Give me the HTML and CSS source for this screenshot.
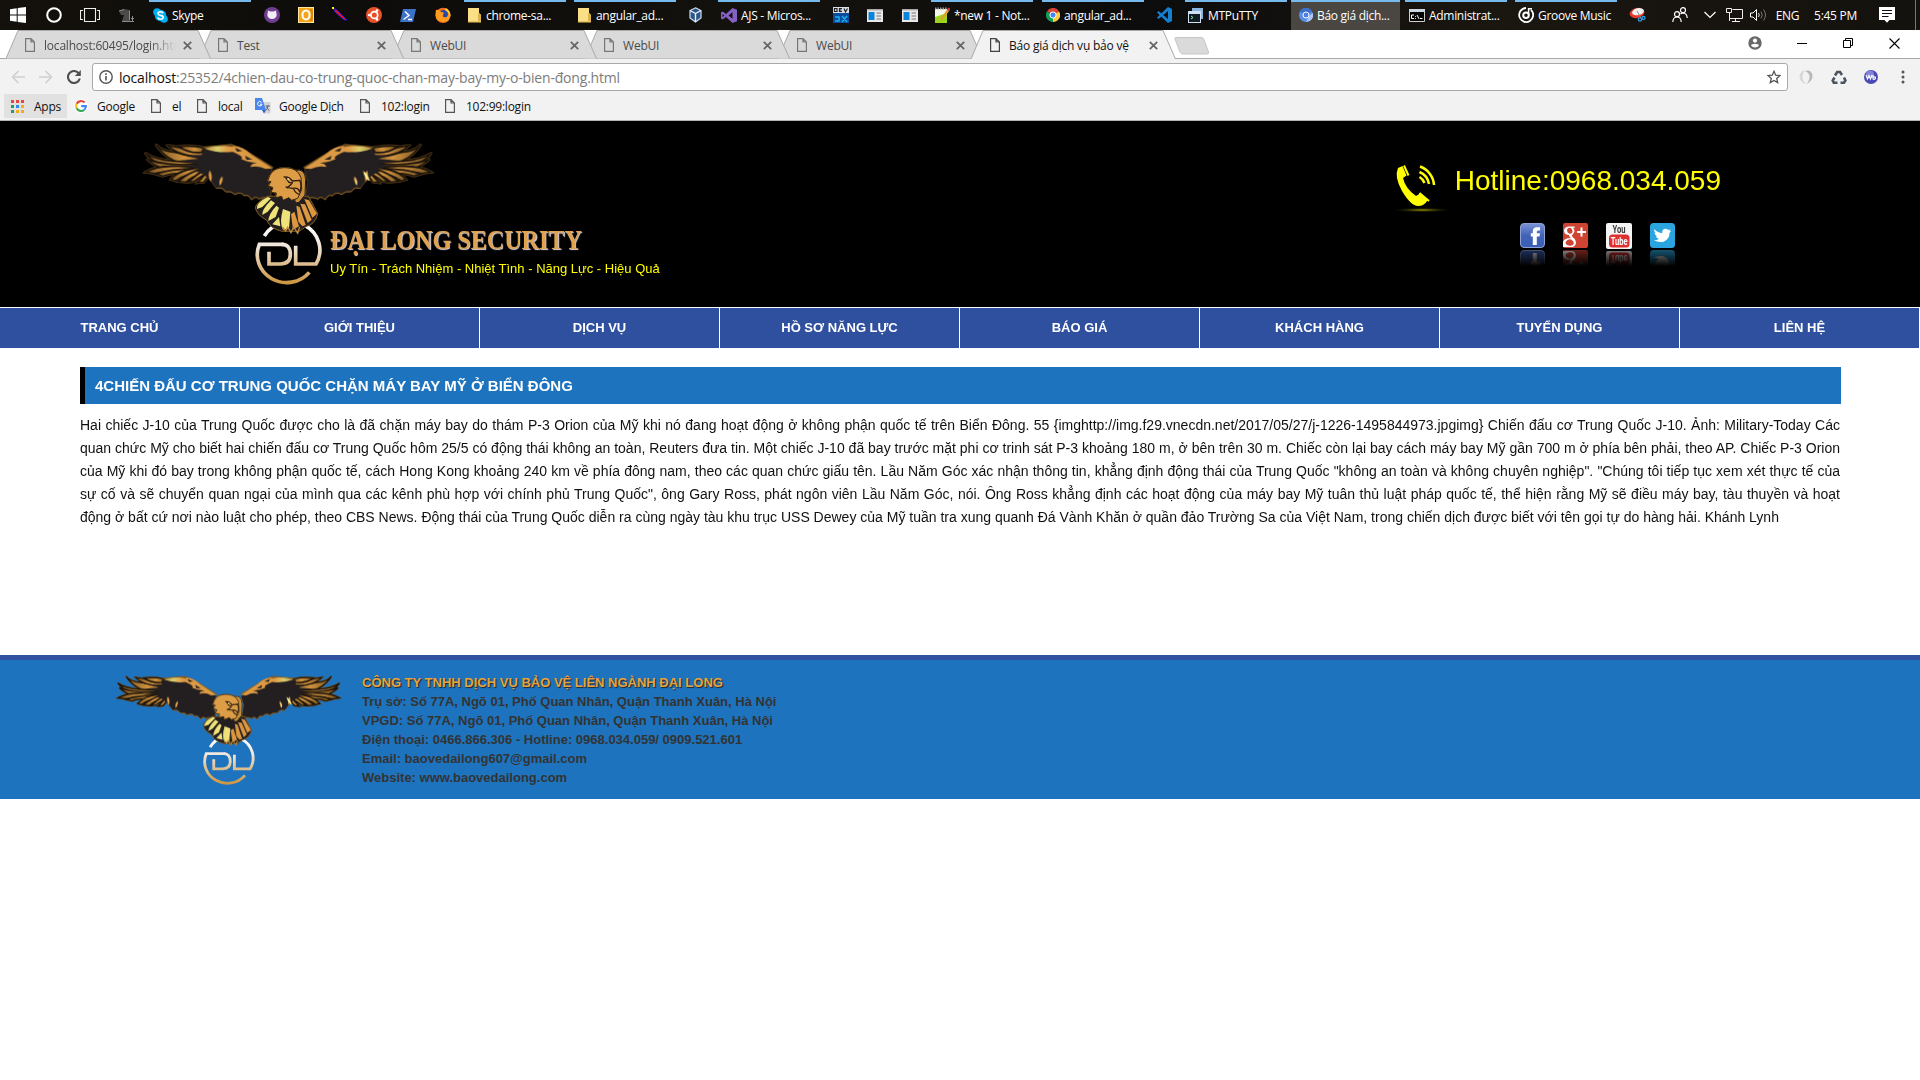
FILE: index.html
```html
<!DOCTYPE html>
<html lang="vi">
<head>
<meta charset="utf-8">
<title>Báo giá dịch vụ bảo vệ</title>
<link rel="stylesheet" href="styles.css">
</head>
<body>
<svg class="defs" width="0" height="0" aria-hidden="true">
  <defs>
    <linearGradient id="gold" x1="0" y1="0" x2="1" y2="0"><stop offset="0" stop-color="#b98a3c"/><stop offset=".45" stop-color="#d8d070"/><stop offset=".75" stop-color="#e3a24a"/><stop offset="1" stop-color="#d9953f"/></linearGradient>
    <linearGradient id="feather" x1="0" y1="0" x2="1" y2="0"><stop offset="0" stop-color="#7a5622"/><stop offset=".6" stop-color="#d29440"/><stop offset="1" stop-color="#8a6128"/></linearGradient>
    <linearGradient id="ring" gradientUnits="userSpaceOnUse" x1="0" y1="270" x2="0" y2="445"><stop offset="0" stop-color="#fff"/><stop offset=".35" stop-color="#efe6dc"/><stop offset="1" stop-color="#cc9540"/></linearGradient>
    <linearGradient id="fbg" x1="0" y1="0" x2="0" y2="1"><stop offset="0" stop-color="#7b93d6"/><stop offset=".5" stop-color="#4263b4"/><stop offset="1" stop-color="#3a5cb8"/></linearGradient>
    <radialGradient id="glow"><stop offset="0" stop-color="#a5a000"/><stop offset="1" stop-color="#000" stop-opacity="0"/></radialGradient>
    <symbol id="page" viewBox="0 0 10 14"><path d="M.6.6H6L9.4 4V13.4H.6ZM6 .6V4H9.4" fill="none" stroke="currentColor" stroke-width="1.2"/></symbol>
    <symbol id="close" viewBox="0 0 9 9"><path d="M.8.8 8.2 8.2M8.2.8.8 8.2" stroke="#666" stroke-width="1.8"/></symbol>
    <symbol id="folder" viewBox="0 0 14 16"><path d="M0 1H11V6L13 8V15H0Z" fill="#fbdf87"/><path d="M11 6 13 8V15H10V7Z" fill="#dcb24a"/><path d="M0 14H13V15.5H0Z" fill="#e9c560"/></symbol>
    <symbol id="window" viewBox="0 0 16 13"><path d="M0 0H16V13H0Z" fill="#e9e9e9"/><path d="M1.500 3H7.500V11H1.500Z" fill="#0a84d8"/><path d="M0 0H16V1.500H0Z" fill="#aaa"/><path d="M9.500 4H14M9.500 7H14M9.500 10H14" stroke="#777"/></symbol>
    <symbol id="wing" viewBox="0 0 465 465" overflow="visible">
      <g fill="url(#feather)" stroke="#1b130b" stroke-width="5.500">
        <path d="M62 28Q78 48 120 52L205 68 190 92Q100 90 62 28Z"/>
        <path d="M98 32Q130 34 158 46L212 40 214 66Q130 66 98 32Z"/>
        <path d="M132 34Q170 30 208 38L200 52Q160 56 132 34Z"/>
        <path d="M30 54Q60 74 112 78L200 84 190 104Q64 102 30 54Z"/>
        <path d="M36 72Q80 92 190 88L180 112Q70 112 36 72Z"/>
        <path d="M30 112Q66 90 130 94L196 96 186 112Q110 104 60 116Z"/>
        <path d="M62 118Q100 102 192 100L182 118Q120 110 84 124Z"/>
        <path d="M106 134Q130 104 196 98L198 112Q150 116 122 138Z"/>
        <path d="M128 140Q160 112 206 100L208 114Q170 124 152 142Z"/>
        <path d="M158 142Q184 118 216 100L220 114Q192 126 178 140Z"/>
        <path d="M186 144Q204 126 222 104L228 116Q214 130 206 142Z"/>
      </g>
      <path d="M205 40 290 32 330 52 412 102 402 140 410 190Q380 184 372 192 362 180 350 194 340 176 328 182 316 168 300 178 288 166 272 170 262 154 244 160L222 132 205 118 182 108 194 102 150 94 190 88 134 76 190 72 160 62 200 60Z" fill="#231f20"/>
      <path d="M410 190Q380 184 372 192 362 180 350 194 340 176 328 182 316 168 300 178 288 166 272 170 262 154 244 160M205 37 290 29 332 48 414 98" fill="none" stroke="#6f4e20" stroke-width="3"/>
      <path d="M207 40Q250 30 292 34L296 50Q250 56 207 40Z" fill="url(#gold)"/>
      <path d="M292 34Q320 32 350 60L412 100 392 102Q370 90 346 96 348 86 366 84 338 82 318 72 330 66 292 50Z" fill="#dd9a45"/>
      <path d="M300 38 322 48 306 50ZM330 62 352 74 334 74Z" fill="#231f20"/>
      <path d="M224 106Q216 122 228 140 234 120 224 106ZM262 124Q250 134 254 152 266 138 262 124Z" fill="#e2a149"/>
    </symbol>
    <symbol id="eagle" viewBox="0 0 930 465">
      <g class="bird">
        <use href="#wing" width="465" height="465"/>
        <use href="#wing" width="465" height="465" transform="translate(920 0) scale(-1 1)"/>
        <path d="M655 124Q664 132 662 150 672 142 655 124ZM684 108Q700 118 704 138 690 134 684 108Z" fill="#fbf29a"/>
      </g>
      <g fill="none" stroke="url(#ring)" stroke-width="11">
        <path d="M388 303A88 84 0 0 1 543 387H482V332"/>
        <path d="M446 328H373A88 84 0 0 0 523 412"/>
        <path d="M402 350V387H436Q466 387 466 358 466 328 440 328.100"/>
      </g>
      <g class="bird">
        <path d="M398 184 520 184 548 236Q540 268 514 274L490 290 440 288Q404 280 396 256 360 236 362 214 372 196 398 184Z" fill="#231f20" stroke="#6f4e20" stroke-width="3"/>
        <g fill="#efe278">
          <path d="M398 186Q362 204 366 222L382 216 408 190Z"/><path d="M408 196Q380 224 382 240L398 230 420 204Z"/><path d="M424 212Q400 238 400 258L422 246 432 218Z"/><path d="M444 222Q432 262 444 284L462 282 466 230Z"/><path d="M432 246 412 268 436 274Z"/>
        </g>
        <g fill="#dc9740">
          <path d="M508 192 522 196 546 236 532 248Z"/><path d="M496 206 510 208 530 254 518 264Z"/><path d="M484 212 494 216 512 270 502 274 490 260Z"/><path d="M468 238 478 230 492 274 474 284Z"/>
        </g>
        <path d="M482 106Q510 100 512 134L510 180 492 202Q476 208 480 186Z" fill="#c78e3d" stroke="#231f20" stroke-width="3"/>
        <path d="M404 122Q414 98 450 98 488 98 498 128L500 164 488 190 470 196 462 188 444 196 440 184 422 188 424 174 408 172 414 158 400 152 408 140 398 138Z" fill="#dd9d47" stroke="#3a260d" stroke-width="3"/>
        <path d="M446 126Q462 124 472 138L494 136Q502 150 494 172 492 156 472 160L452 156M452 128 462 142 474 144M470 146 456 160M476 162Q482 176 494 178" fill="none" stroke="#2c1c10" stroke-width="4"/>
        <circle cx="460" cy="133" r="3" fill="#f7e2a0"/>
        <path d="M442 276 452 288 458 276 468 292 476 276 488 294 494 276" fill="none" stroke="#b98a3c" stroke-width="4"/>
      </g>
    </symbol>
    <symbol id="fb" viewBox="0 0 25 25"><rect x=".5" y=".5" width="24" height="24" rx="3.500" fill="url(#fbg)" stroke="#8ea1d4"/><path d="M12.800 22V13.500H10.800V10.300H12.800V8.200Q12.800 4.300 17 4.300H20V7.600H18.200Q16.800 7.600 16.800 9V10.300H20L19.500 13.500H16.800V22Z" fill="#fff"/></symbol>
    <symbol id="gp" viewBox="0 0 25 25"><rect width="25" height="25" rx="2" fill="#cf4332"/><path d="M11.500 3.500H5.500Q1 4 1 8 1.500 12 6 12 6 14 8 15 1 15 0 19V24H10Q14 22 12.500 17.500 12 15.500 9.500 14 8 12.500 10 11 13 8 10 4.700H12ZM7 4.700Q9.500 5.500 9.500 9 9 11 7 10.800 4 10 4 7 4.500 4.500 7 4.700ZM7.500 16.300Q11 18 10.800 20.500 10 23 6.500 22.800 2.500 22 2.600 19.500 3.500 16.500 7.500 16.300Z" fill="#fff" fill-rule="evenodd"/><path d="M18.500 4.500V13.500M14 9H23" stroke="#fff" stroke-width="2"/></symbol>
    <symbol id="yt" viewBox="0 0 26 26"><rect width="26" height="26" rx="2" fill="#f4f4f4"/><rect x="3" y="11.500" width="20.500" height="13" rx="3.500" fill="#df2f2f"/><text x="13" y="10.300" font-family="Roboto" font-weight="700" font-size="10.500" text-anchor="middle" textLength="13" lengthAdjust="spacingAndGlyphs" fill="#333">You</text><text x="13.200" y="22" font-family="Roboto" font-weight="700" font-size="11" text-anchor="middle" textLength="17" lengthAdjust="spacingAndGlyphs" fill="#fff">Tube</text></symbol>
    <symbol id="tw" viewBox="0 0 25 25"><rect width="25" height="25" rx="3.500" fill="#2aa5df"/><path d="M4.500 6.300Q8 10 12.300 10.200 11.800 6 15.500 5.800 17.200 5.800 18.300 7L20.500 6.200 19.400 8.200 21.300 7.700 19.600 9.700Q19.500 16.500 13.500 18.700 8.300 20 4 17.300 7 17.300 9 15.800 6.500 15.300 5.800 13.200H7.400Q4.500 12 4.500 9.600L6 10Q3.300 8 4.500 6.300Z" fill="#fff"/></symbol>
  </defs>
</svg>

<header class="taskbar">
  <span class="slot"><svg width="16" height="16" viewBox="0 0 16 16"><path d="M0 2.200 6.700 1.300V7.500H0ZM7.700 1.100 16 0V7.500H7.700ZM0 8.500H6.700V14.700L0 13.800ZM7.700 8.500H16V16L7.700 14.900Z" fill="#fff"/></svg></span>
  <span class="slot"><svg width="16" height="16" viewBox="0 0 16 16"><circle cx="8" cy="8" r="6.800" fill="none" stroke="#fff" stroke-width="2"/></svg></span>
  <span class="slot"><svg width="20" height="14" viewBox="0 0 20 14"><path d="M4.500.5H15.500V13.500H4.500ZM3 2.500H.5V11.500H3M17 2.500H19.500V11.500H17" fill="none" stroke="#eee" stroke-width="1.100"/></svg></span>
  <span class="slot"><svg width="15" height="13" viewBox="0 0 15 13"><path d="M0 2 5 0 11 1V12H3L5 6 2 6Z" fill="#4a4a4a"/><path d="M0 2 5 .5M10.500 2V11M13.500 7V12.500M3 12.500H15M12 9.500H15" stroke="#8c8c8c" fill="none"/></svg></span>
  <span class="task open"><svg width="15" height="15" viewBox="0 0 15 15"><circle cx="7.500" cy="7.500" r="5.800" fill="#00aff0"/><circle cx="4" cy="4" r="3.800" fill="#00aff0"/><circle cx="11" cy="11" r="3.800" fill="#00aff0"/><path d="M10.200 5.200Q9.500 3.800 7.500 3.800 5 3.900 5 5.500 5.200 7 7.500 7.400 10.200 7.800 10.200 9.500 10 11.300 7.500 11.300 5.200 11.200 4.700 9.600" fill="none" stroke="#fff" stroke-width="1.600"/></svg><b>Skype</b></span>
  <span class="slot"><svg width="16" height="16" viewBox="0 0 16 16"><circle cx="8" cy="8" r="8" fill="#6f3d92"/><path d="M4 3.500 6.300 4.600H9.700L12 3.500 12.700 8Q12 12 8 12 4 12 3.300 8Z" fill="#f3ecf6"/></svg></span>
  <span class="slot"><svg width="16" height="16" viewBox="0 0 16 16"><rect x=".5" y=".5" width="15" height="15" fill="#f6a31c" stroke="#ffe6a0"/><ellipse cx="8" cy="8" rx="3.600" ry="4.600" fill="none" stroke="#fff" stroke-width="2"/><path d="M12 3H14V13H12" stroke="#c76c00" fill="none"/></svg></span>
  <span class="slot"><svg width="16" height="16" viewBox="0 0 16 16"><path d="M1 1 5 3 15 13 12 13 3 5Z" fill="#e0132c" stroke="#1b1bd0"/><path d="M0 0H2V2H0Z" fill="#ff0"/></svg></span>
  <span class="slot"><svg width="16" height="16" viewBox="0 0 16 16"><circle cx="8" cy="8" r="8" fill="#e5522a"/><circle cx="8.300" cy="8" r="3.400" fill="none" stroke="#fff" stroke-width="1.700"/><circle cx="3.200" cy="8" r="1.300" fill="#fff"/><circle cx="11" cy="3.600" r="1.300" fill="#fff"/><circle cx="11" cy="12.400" r="1.300" fill="#fff"/></svg></span>
  <span class="slot"><svg width="16" height="13" viewBox="0 0 16 13"><path d="M3 0H16L13 13H0Z" fill="#3b73c8"/><path d="M5 2.500 9 6.500 3.500 10.500M8 10.500H12" stroke="#fff" stroke-width="1.500" fill="none"/></svg></span>
  <span class="slot"><svg width="16" height="16" viewBox="0 0 16 16"><circle cx="8" cy="8.300" r="7.600" fill="#f26a1b"/><circle cx="8.500" cy="7.500" r="4.500" fill="#2a4ba0"/><path d="M1 3Q4 2 6 5 10 5 8 8 7 11 12 10 14 8 13 3 17 9 13 14 6 17 1.500 12 0 8 1 3Z" fill="#ff9a1f"/><path d="M11 1Q16 4 15.500 10 14 5 10 3Z" fill="#ffd42e"/></svg></span>
  <span class="task open"><svg width="14" height="16"><use href="#folder"/></svg><b>chrome-sa...</b></span>
  <span class="task open"><svg width="14" height="16"><use href="#folder"/></svg><b>angular_ad...</b></span>
  <span class="slot"><svg width="13" height="16" viewBox="0 0 13 16"><path d="M6.500.8 12 3.500V11L6.500 15 1 11V3.500Z" fill="#2d5484" stroke="#cfe0f2" stroke-width="1.200"/><path d="M1 3.500 6.500 6.500 12 3.500M6.500 6.500V15" stroke="#e6f0fa" fill="none" stroke-width="1.400"/></svg></span>
  <span class="task open tight"><svg width="16" height="15" viewBox="0 0 16 15"><path d="M11.500 0 16 1.800V13.200L11.500 15 5 9 1.800 11.500 0 10.600V4.400L1.800 3.500 5 6ZM11.500 4.200 7.500 7.500 11.500 10.800ZM1.600 5.800V9.200L3.300 7.500Z" fill="#8661c5" fill-rule="evenodd"/></svg><b>AJS - Micros...</b></span>
  <span class="slot"><svg width="16" height="16" viewBox="0 0 16 16"><path d="M0 0H16V6H0Z" fill="#d9dde4"/><path d="M0 6H16V16H0Z" fill="#0d4b9c"/><path d="M1.500 1.500V4.500H4V1.500ZM9 1.500H6.500V4.500H9M6.500 3H8.500M11 1.500 12.500 5 14.500 1.500" stroke="#222" fill="none" stroke-width="1.200"/><path d="M2 10H6V14H2M9 9 14 15M14 9 9 15" stroke="#18b1ef" stroke-width="1.500" fill="none"/></svg></span>
  <span class="slot"><svg width="16" height="13"><use href="#window"/></svg></span>
  <span class="slot"><svg width="16" height="13"><use href="#window"/></svg></span>
  <span class="task open"><svg width="15" height="17" viewBox="0 0 15 17"><path d="M0 2H12V16H0Z" fill="#f4f8ec"/><path d="M0 10 12 6V16H0Z" fill="#9bd51c"/><path d="M0 1.500H12" stroke="#999" stroke-width="2" stroke-dasharray="1.500 1"/><path d="M14 2 6 13" stroke="#e0a030" stroke-width="2.400"/><path d="M14.500 1 13 3.500" stroke="#c33" stroke-width="2.400"/></svg><b>*new 1 - Not...</b></span>
  <span class="task open"><svg width="14" height="14" viewBox="0 0 14 14"><path d="M7 7 .9 3.500A7 7 0 0 1 13.100 3.500Z" fill="#db4437"/><path d="M7 7 13.100 3.500A7 7 0 0 1 7 14Z" fill="#ffcd40"/><path d="M7 7V14A7 7 0 0 1 .9 3.500Z" fill="#0f9d58"/><circle cx="7" cy="7" r="3.100" fill="#4285f4" stroke="#fff"/></svg><b>angular_ad...</b></span>
  <span class="slot"><svg width="16" height="16" viewBox="0 0 16 16"><path d="M12 0 16 2V14L12 16 1 5.500 2.500 4 12 12V4L2.500 12 1 10.500Z" fill="#1580cf"/></svg></span>
  <span class="task open tight"><svg width="16" height="15" viewBox="0 0 16 15"><path d="M4 0H15V11H4Z" fill="#8ab5de"/><path d="M0 3H13V15H0Z" fill="#cfe0f3"/><path d="M1 6H12V14H1Z" fill="#101c24"/><path d="M3 8 5 9.500 3 11" stroke="#7f7" fill="none"/></svg><b>MTPuTTY</b></span>
  <span class="task open active"><svg width="14" height="14" viewBox="0 0 14 14"><circle cx="7" cy="7" r="7" fill="#5a8ee8"/><path d="M7 7 .9 3.500A7 7 0 0 1 13.100 3.500Z" fill="#3a6fd0"/><path d="M7 14 10 8 13.800 5A7 7 0 0 1 7 14Z" fill="#a9c8fb"/><circle cx="7" cy="7" r="3" fill="#4a80e6" stroke="#fff"/></svg><b>Báo giá dịch...</b></span>
  <span class="task open"><svg width="16" height="13" viewBox="0 0 16 13"><path d="M.5.5H15.500V12.500H.5Z" fill="#050505" stroke="#ccc"/><path d="M0 0H16V3H0Z" fill="#ccd6e0"/><path d="M5 6H2.500V9.500H5M6.500 7V7.800M6.500 9V9.800M8 6 10 9.800M11 9.500H13.500" stroke="#fff" fill="none"/></svg><b>Administrat...</b></span>
  <span class="task open tight"><svg width="16" height="16" viewBox="0 0 16 16"><path d="M13 2.900A7 7 0 1 1 8 1" fill="none" stroke="#fff" stroke-width="1.800"/><circle cx="8" cy="8.200" r="2.800" fill="none" stroke="#fff" stroke-width="2"/><path d="M10.600 8V1.800H14" stroke="#fff" stroke-width="1.500" fill="none"/></svg><b>Groove Music</b></span>
  <span class="slot"><svg width="17" height="16" viewBox="0 0 17 16"><ellipse cx="8" cy="6" rx="7.500" ry="5" transform="rotate(-12 8 6)" fill="#e63a2e"/><ellipse cx="9" cy="4.700" rx="6" ry="3.500" transform="rotate(-12 9 4.700)" fill="#f1f1f1"/><path d="M8 4 12 11" stroke="#888"/><circle cx="11" cy="12.500" r="1.700" fill="none" stroke="#2a9be0" stroke-width="1.300"/><circle cx="14.500" cy="11" r="1.500" fill="none" stroke="#2a9be0" stroke-width="1.300"/></svg></span>
  <span class="slot people"><svg width="16" height="16" viewBox="0 0 16 16"><g fill="none" stroke="#fff" stroke-width="1.200"><circle cx="11" cy="3.200" r="2.500"/><circle cx="5" cy="7.200" r="2.500"/><path d="M.8 15Q1 10 5 10 9 10 9.200 15M8.500 7Q9.500 6 11 6 15 6.200 15.200 11"/></g></svg></span>
  <span class="slot"><svg width="12" height="8" viewBox="0 0 12 8"><path d="M.5 1 6 6.500 11.500 1" fill="none" stroke="#fff" stroke-width="1.200"/></svg></span>
  <span class="slot"><svg width="17" height="14" viewBox="0 0 17 14"><path d="M6.500 1.500H16.500V10.500H4M3.500 4.500V13M6 13.500H14M9.500 10.500V13.500M.5.5H5.500V4.500H.5Z" fill="none" stroke="#eee"/></svg></span>
  <span class="slot"><svg width="17" height="14" viewBox="0 0 17 14"><path d="M.5 5H3L6.500 1.500V12.500L3 9H.5Z" fill="none" stroke="#fff"/><path d="M8.500 5Q10 7 8.500 9" fill="none" stroke="#ddd"/><path d="M11 3.500Q13.500 7 11 10.500M13.500 1.500Q17.500 7 13.500 12.500" fill="none" stroke="#777"/></svg></span>
  <span class="slot lang"><b>ENG</b></span>
  <span class="slot clock"><b>5:45 PM</b></span>
  <span class="slot notes"><svg width="16" height="16" viewBox="0 0 16 16"><path d="M0 0H16V13H10.500L8 15.800 5.500 13H0Z" fill="#fff"/><path d="M3 3.500H13M3 6.500H13M3 9.500H9.500" stroke="#111"/></svg></span>
  <span class="peek"></span>
</header>

<nav class="tabs">
  <div class="tab"><svg class="tab-shape" width="205" height="29" viewBox="0 0 205 29"><path d="M0 28.500 12 .5H192L204.500 28.500"/></svg><svg class="pg" width="10" height="14"><use href="#page"/></svg><span class="fade">localhost:60495/login.htm</span><svg width="9" height="9"><use href="#close"/></svg></div>
  <div class="tab"><svg class="tab-shape" width="205" height="29" viewBox="0 0 205 29"><path d="M0 28.500 12 .5H192L204.500 28.500"/></svg><svg class="pg" width="10" height="14"><use href="#page"/></svg><span>Test</span><svg width="9" height="9"><use href="#close"/></svg></div>
  <div class="tab"><svg class="tab-shape" width="205" height="29" viewBox="0 0 205 29"><path d="M0 28.500 12 .5H192L204.500 28.500"/></svg><svg class="pg" width="10" height="14"><use href="#page"/></svg><span>WebUI</span><svg width="9" height="9"><use href="#close"/></svg></div>
  <div class="tab"><svg class="tab-shape" width="205" height="29" viewBox="0 0 205 29"><path d="M0 28.500 12 .5H192L204.500 28.500"/></svg><svg class="pg" width="10" height="14"><use href="#page"/></svg><span>WebUI</span><svg width="9" height="9"><use href="#close"/></svg></div>
  <div class="tab"><svg class="tab-shape" width="205" height="29" viewBox="0 0 205 29"><path d="M0 28.500 12 .5H192L204.500 28.500"/></svg><svg class="pg" width="10" height="14"><use href="#page"/></svg><span>WebUI</span><svg width="9" height="9"><use href="#close"/></svg></div>
  <div class="tab current"><svg class="tab-shape" width="205" height="29" viewBox="0 0 205 29"><path d="M0 29 12 .5H192L204.500 29"/></svg><svg class="pg" width="10" height="14"><use href="#page"/></svg><span>Báo giá dịch vụ bảo vệ</span><svg width="9" height="9"><use href="#close"/></svg></div>
  <svg class="newtab" width="36" height="18" viewBox="0 0 36 18"><path d="M2 .5H27Q29 .5 29.700 2L34.500 15Q35 17 33 17H9Q7 17 6.300 15.500L1 2Q.5.500 2 .5Z" fill="#dadada" stroke="#c6c6c6"/></svg>
  <div class="win">
    <svg width="14" height="14" viewBox="0 0 14 14"><circle cx="7" cy="7" r="6.700" fill="#696969"/><circle cx="7" cy="4.600" r="2.100" fill="#fff"/><path d="M3 9.500Q3.500 7.800 7 7.800 10.500 7.800 11 9.500 9.500 11.500 7 11.500 4.500 11.500 3 9.500Z" fill="#fff"/></svg>
    <svg width="10" height="10" viewBox="0 0 10 10"><path d="M0 5.500H10" stroke="#000"/></svg>
    <svg width="10" height="10" viewBox="0 0 10 10"><path d="M.5 2.500H7.500V9.500H.5ZM2.500 2.500V.5H9.500V7.500H7.500" fill="none" stroke="#000"/></svg>
    <svg width="11" height="11" viewBox="0 0 11 11"><path d="M.5.5 10.500 10.500M10.500.5.5 10.500" stroke="#000" stroke-width="1.100"/></svg>
  </div>
</nav>

<div class="toolbar">
  <svg width="14" height="14" viewBox="0 0 14 14"><path d="M14 7H1.500M7.500 1 1.500 7 7.500 13" fill="none" stroke="#d0d0d0" stroke-width="1.700"/></svg>
  <svg width="14" height="14" viewBox="0 0 14 14"><path d="M0 7H12.500M6.500 1 12.500 7 6.500 13" fill="none" stroke="#d0d0d0" stroke-width="1.700"/></svg>
  <svg width="14" height="14" viewBox="0 0 14 14"><path d="M12 3.700A6 6 0 1 0 12.800 8.500" fill="none" stroke="#4f4f4f" stroke-width="2.100"/><path d="M13.800 0V6H7.800Z" fill="#4f4f4f"/></svg>
  <div class="omnibox">
    <svg width="14" height="14" viewBox="0 0 14 14"><circle cx="7" cy="7" r="6.200" fill="none" stroke="#555" stroke-width="1.400"/><path d="M7 6V10.500M7 3.300V4.900" stroke="#555" stroke-width="1.600"/></svg>
    <span class="url"><i>localhost</i>:25352/4chien-dau-co-trung-quoc-chan-may-bay-my-o-bien-đong.html</span>
    <svg width="14" height="14" viewBox="0 0 14 14"><path d="M7 1.300 8.700 5.200 13 5.600 9.700 8.400 10.700 12.600 7 10.400 3.300 12.600 4.300 8.400 1 5.600 5.300 5.200Z" fill="none" stroke="#555" stroke-width="1.300"/></svg>
  </div>
  <div class="ext">
    <svg width="16" height="16" viewBox="0 0 16 16"><path d="M7 1Q1 3 1.500 9 3 14 8 15 4 11 4.500 7 5 4 7 1Z" fill="#d8d8d8"/><path d="M7 2Q13 0 14.500 6 15 12 8.500 15 12 11 11.500 7 11 4 7 2Z" fill="#b8b8b8"/></svg>
    <svg width="16" height="15" viewBox="0 0 16 15"><g fill="none" stroke="#4b5560" stroke-width="2.600"><path d="M4 5.500 6.200 2H9L11 5"/><path d="M13 7.500 14.400 10.500 13 12.700H9.500"/><path d="M6.500 12.700H2.800L1.700 10.500 3.500 7.500"/></g></svg>
    <svg width="14" height="14" viewBox="0 0 14 14"><circle cx="7" cy="7" r="7" fill="#4a4ab5"/><circle cx="6" cy="4.500" r="4" fill="#8184d4"/><path d="M2 5 3.500 9 5 5.500 6.500 9 8 5M9 5V9.500M9 7.500Q11.500 6 11.500 8 11 10 9 9" fill="none" stroke="#fff" stroke-width="1.100"/></svg>
    <svg width="4" height="14" viewBox="0 0 4 14"><g fill="#555"><circle cx="2" cy="2" r="1.500"/><circle cx="2" cy="7" r="1.500"/><circle cx="2" cy="12" r="1.500"/></g></svg>
  </div>
</div>

<div class="bookmarks">
  <span class="bm apps"><svg width="13" height="13" viewBox="0 0 13 13"><path d="M0 0H3V3H0ZM5 0H8V3H5ZM10 0H13V3H10Z" fill="#e8453c"/><path d="M0 5H3V8H0Z" fill="#249e5d"/><path d="M5 5H8V8H5Z" fill="#2f88f0"/><path d="M10 5H13V8H10ZM5 10H8V13H5ZM10 10H13V13H10Z" fill="#f9ab17"/><path d="M0 10H3V13H0Z" fill="#249e5d"/></svg>Apps</span>
  <span class="bm b-google"><svg width="14" height="14" viewBox="0 0 14 14"><circle cx="7" cy="7" r="7" fill="#fff"/><g fill="none" stroke-width="2.100"><path d="M10.600 3.600A5 5 0 0 0 2.600 4.700" stroke="#ea4335"/><path d="M2.600 4.700A5 5 0 0 0 2.600 9.300" stroke="#fbbc05"/><path d="M2.600 9.300A5 5 0 0 0 10.300 10.700" stroke="#34a853"/><path d="M10.300 10.700Q12 9.300 11.900 7.100H7.200" stroke="#4285f4"/></g></svg>Google</span>
  <span class="bm b-el"><svg width="10" height="14"><use href="#page"/></svg>el</span>
  <span class="bm b-local"><svg width="10" height="14"><use href="#page"/></svg>local</span>
  <span class="bm b-trans"><svg width="16" height="16" viewBox="0 0 16 16"><path d="M6 4H15.500V15.500H9Z" fill="#d4d4d4"/><path d="M0 0H7L11 12H0Z" fill="#4a86ee"/><path d="M7 12H11L9 15.500Z" fill="#2f62c0"/><path d="M6.500 4.300A2.200 2.200 0 1 0 7 6.200H5" fill="none" stroke="#fff"/><path d="M10.500 8H15M13 7V8Q12.500 11 11 12M11.500 9Q13 12 14.500 12.500" stroke="#667" fill="none"/></svg>Google Dịch</span>
  <span class="bm b-102"><svg width="10" height="14"><use href="#page"/></svg>102:login</span>
  <span class="bm b-10299"><svg width="10" height="14"><use href="#page"/></svg>102:99:login</span>
</div>

<section class="banner">
  <svg class="logo" width="310" height="155"><use href="#eagle"/></svg>
  <div class="brand"><h1>ĐẠI LONG SECURITY</h1><p>Uy Tín - Trách Nhiệm - Nhiệt Tình - Năng Lực - Hiệu Quả</p></div>
  <div class="contact">
    <div class="hotline">
      <svg width="64" height="50" viewBox="0 0 64 50"><g fill="#ff0"><path d="M7 4 11.500 2 15.500 11.500 12 14Q14 24 25 32L29 29.500 36.500 36.500Q33 42 27 42 20 42 11 27 3 13 7 4Z"/></g><path d="M13 1.500 17.500 11.500M28.500 29 38 37" stroke="#ff0" stroke-width="2"/><g fill="none" stroke="#ff0" stroke-width="2.500"><path d="M29 2.500A21 21 0 0 1 43 21"/><path d="M28.500 8A16 16 0 0 1 38 20"/><path d="M28.500 13A11 11 0 0 1 33.500 19"/></g><ellipse cx="31" cy="46" rx="31" ry="2.500" fill="url(#glow)"/></svg>
      <span>Hotline:0968.034.059</span>
    </div>
    <div class="social">
      <div class="s"><svg width="25" height="25"><use href="#fb"/></svg><svg class="mirror" width="25" height="25"><use href="#fb"/></svg></div>
      <div class="s"><svg width="25" height="25"><use href="#gp"/></svg><svg class="mirror" width="25" height="25"><use href="#gp"/></svg></div>
      <div class="s"><svg width="26" height="26"><use href="#yt"/></svg><svg class="mirror" width="26" height="26"><use href="#yt"/></svg></div>
      <div class="s"><svg width="25" height="25"><use href="#tw"/></svg><svg class="mirror" width="25" height="25"><use href="#tw"/></svg></div>
    </div>
  </div>
</section>

<nav class="menu"><a>TRANG CHỦ</a><a>GIỚI THIỆU</a><a>DỊCH VỤ</a><a>HỒ SƠ NĂNG LỰC</a><a>BÁO GIÁ</a><a>KHÁCH HÀNG</a><a>TUYỂN DỤNG</a><a>LIÊN HỆ</a></nav>

<main>
  <h2>4CHIẾN ĐẤU CƠ TRUNG QUỐC CHẶN MÁY BAY MỸ Ở BIỂN ĐÔNG</h2>
  <p class="article">Hai chiếc J-10 của Trung Quốc được cho là đã chặn máy bay do thám P-3 Orion của Mỹ khi nó đang hoạt động ở không phận quốc tế trên Biển Đông. 55 {imghttp://img.f29.vnecdn.net/2017/05/27/j-1226-1495844973.jpgimg} Chiến đấu cơ Trung Quốc J-10. Ảnh: Military-Today Các quan chức Mỹ cho biết hai chiến đấu cơ Trung Quốc hôm 25/5 có động thái không an toàn, Reuters đưa tin. Một chiếc J-10 đã bay trước mặt phi cơ trinh sát P-3 khoảng 180 m, ở bên trên 30 m. Chiếc còn lại bay cách máy bay Mỹ gần 700 m ở phía bên phải, theo AP. Chiếc P-3 Orion của Mỹ khi đó bay trong không phận quốc tế, cách Hong Kong khoảng 240 km về phía đông nam, theo các quan chức giấu tên. Lầu Năm Góc xác nhận thông tin, khẳng định động thái của Trung Quốc "không an toàn và không chuyên nghiệp". "Chúng tôi tiếp tục xem xét thực tế của sự cố và sẽ chuyển quan ngại của mình qua các kênh phù hợp với chính phủ Trung Quốc", ông Gary Ross, phát ngôn viên Lầu Năm Góc, nói. Ông Ross khẳng định các hoạt động của máy bay Mỹ tuân thủ luật pháp quốc tế, thể hiện rằng Mỹ sẽ điều máy bay, tàu thuyền và hoạt động ở bất cứ nơi nào luật cho phép, theo CBS News. Động thái của Trung Quốc diễn ra cùng ngày tàu khu trục USS Dewey của Mỹ tuần tra xung quanh Đá Vành Khăn ở quần đảo Trường Sa của Việt Nam, trong chiến dịch được biết với tên gọi tự do hàng hải. Khánh Lynh</p>
</main>

<footer class="site-footer">
  <svg class="foot-logo" width="240" height="120"><use href="#eagle"/></svg>
  <div class="address">
    <p class="company">CÔNG TY TNHH DỊCH VỤ BẢO VỆ LIÊN NGÀNH ĐẠI LONG</p>
    <p>Trụ sở: Số 77A, Ngõ 01, Phố Quan Nhân, Quận Thanh Xuân, Hà Nội</p>
    <p>VPGD: Số 77A, Ngõ 01, Phố Quan Nhân, Quận Thanh Xuân, Hà Nội</p>
    <p>Điện thoại: 0466.866.306 - Hotline: 0968.034.059/ 0909.521.601</p>
    <p>Email: baovedailong607@gmail.com</p>
    <p>Website: www.baovedailong.com</p>
  </div>
</footer>
</body>
</html>
```
FILE: styles.css
```css
* { box-sizing: border-box; margin: 0; padding: 0; }
body { width: 1920px; height: 1080px; overflow: hidden; background: #fff; font-family: "Liberation Sans", Arial, sans-serif; font-size: 14px; }
svg { display: block; flex: none; }
.defs { position: absolute; }

/* Taskbar */
.taskbar {
  display: grid; height: 30px; color: #fff;
  grid-template-columns: 36px 36px 36px 37px 110px 34px 34px 34px 34px 34px 35px 110px 107px 37px 110px 34px 34px 35px 111px 109px 34px 106px 114px 110px 109px 34px 43px 25px 25px 23px 38px 62px 45px 5px;
  background: linear-gradient(90deg, #14110c, #0d0c0a 20%, #14120d 40%, #0c0c0c 60%, #1a1610 78%, #14120e);
  font: 12px "Open Sans", "Noto Sans", sans-serif;
}
.taskbar b { font-weight: 400; letter-spacing: -.3px; white-space: nowrap; }
.slot { display: flex; align-items: center; justify-content: center; }
.people { padding-left: 8px; }
.lang { padding-right: 3px; }
.clock { padding-right: 7px; }
.notes { padding-right: 12px; }
.task { display: flex; align-items: center; gap: 4px; width: 102px; margin-left: 4px; padding-left: 4px; border-top: 2px solid #76b9ed; padding-bottom: 2px; }
.tight { padding-left: 3px; }
.active { width: 109px; padding-left: 8px; background: #4a4641; }
.peek { border-left: 1px solid #777; }

/* Tab strip */
.tabs { display: flex; height: 29px; padding-left: 6px; background: linear-gradient(#fff 28px, #a9a9a9 28px); font: 12px "Open Sans", sans-serif; letter-spacing: -.2px; color: #4a4a4a; }
.tab { position: relative; display: flex; align-items: center; width: 205px; margin-right: -12px; padding: 1px 18px 0 19px; flex: none; }
.tab:nth-child(1) { z-index: 5; }
.tab:nth-child(2) { z-index: 4; }
.tab:nth-child(3) { z-index: 3; }
.tab:nth-child(4) { z-index: 2; }
.tab:nth-child(5) { z-index: 1; }
.tab > * { position: relative; }
.tab > .tab-shape { position: absolute; left: 0; top: 0; fill: #dadada; stroke: #a9a9a9; }
.tab.current { z-index: 6; color: #111; }
.tab.current > .tab-shape { fill: #f2f2f2; }
.pg { color: #777; }
.current .pg { color: #444; }
.tab span { flex: 1; margin-left: 9px; white-space: nowrap; }
.tab .fade { max-width: 132px; margin-right: 7px; -webkit-mask: linear-gradient(90deg, #000 80%, transparent); mask: linear-gradient(90deg, #000 80%, transparent); }
.newtab { margin: 7px 0 0 10px; }
.win { display: flex; align-items: center; margin-left: auto; padding: 0 20px 3px 0; gap: 36px; }
.win svg:first-child { margin-right: -1px; }

/* Address bar */
.toolbar { display: flex; align-items: center; height: 35px; padding: 1px 0 0 11px; gap: 14px; background: #f2f2f2; }
.omnibox { display: flex; align-items: center; width: 1696px; height: 28px; margin-left: -3px; padding: 0 6px; background: #fff; border: 1px solid #a9a9a9; border-radius: 3px; }
.url { flex: 1; padding-left: 6px; font: 14px "Open Sans", sans-serif; letter-spacing: -.19px; color: #7c7c7c; }
.url i { font-style: normal; color: #111; }
.ext { display: flex; align-items: center; gap: 17px; margin-left: -4px; }
.ext svg:last-child { margin-left: 6px; }

/* Bookmarks */
.bookmarks { display: flex; height: 27px; padding-left: 4px; background: #f2f2f2; border-bottom: 1px solid #b4b4b4; font: 12px "Open Sans", sans-serif; letter-spacing: -.25px; color: #111; }
.bm { display: flex; align-items: center; height: 24px; white-space: nowrap; gap: 8px; }
.bm svg { color: #555; }
.apps { width: 63px; padding-left: 7px; gap: 10px; background: #e1e1e1; }
.b-google { width: 84px; padding-left: 7px; gap: 9px; }
.b-el { width: 46px; gap: 11px; }
.b-local { width: 58px; gap: 11px; }
.b-trans { width: 105px; }
.b-102 { width: 85px; gap: 11px; }
.b-10299 { gap: 11px; }

/* Site header */
.banner { display: flex; height: 186px; padding-left: 135px; background: #000; }
.logo { margin-top: 14px; }
.bird { filter: drop-shadow(0 0 2px #a8752a); }
.brand { width: 400px; margin: 102px 0 0 -115px; }
.brand h1 { width: max-content; transform-origin: 0 50%; transform: scaleX(.861); font: bold 28px/34px "Liberation Serif", serif; color: #dfa24f; text-shadow: 1px 1px 1px #d9d5e6; white-space: nowrap; }
.brand p { padding-top: 3px; font-size: 13px; line-height: 18px; color: #ff0; white-space: nowrap; }
.contact { margin: 43px 199px 0 auto; }
.hotline { display: flex; font-size: 28px; line-height: 34px; color: #ff0; }
.social { display: flex; gap: 18px; padding: 9px 0 0 129px; }
.s { height: 44px; overflow: hidden; -webkit-mask: linear-gradient(#000 26px, rgba(0,0,0,.5) 27px, transparent 43px); mask: linear-gradient(#000 26px, rgba(0,0,0,.5) 27px, transparent 43px); }
.mirror { margin-top: 2px; transform: scaleY(-1); }

/* Menu */
.menu { display: grid; grid-template-columns: repeat(8, 240px); height: 41px; border-top: 1px solid #fff; }
.menu a { display: flex; align-items: center; justify-content: center; padding-bottom: 2px; background: #2f509f; border-right: 1px solid #fff; color: #fff; font-weight: bold; font-size: 13px; }

/* Article */
main { height: 307px; padding: 19px 79px 0 80px; }
main h2 { height: 37px; padding-left: 10px; border-left: 5px solid #000; background: #1e73be; color: #fff; font-size: 15px; line-height: 37px; }
.article { padding: 10px 1px 0 0; line-height: 23px; text-align: justify; color: #111; }

/* Footer */
.site-footer { display: flex; height: 144px; border-top: 5px solid #2f509f; background: #1e73be; }
.foot-logo { margin: 9px 0 0 110px; }
.address { margin: 13px 0 0 12px; font-weight: bold; font-size: 13px; line-height: 19px; color: #333; }
.company { color: #e8a33d; text-shadow: 1px 1px 1px #222; }
```
